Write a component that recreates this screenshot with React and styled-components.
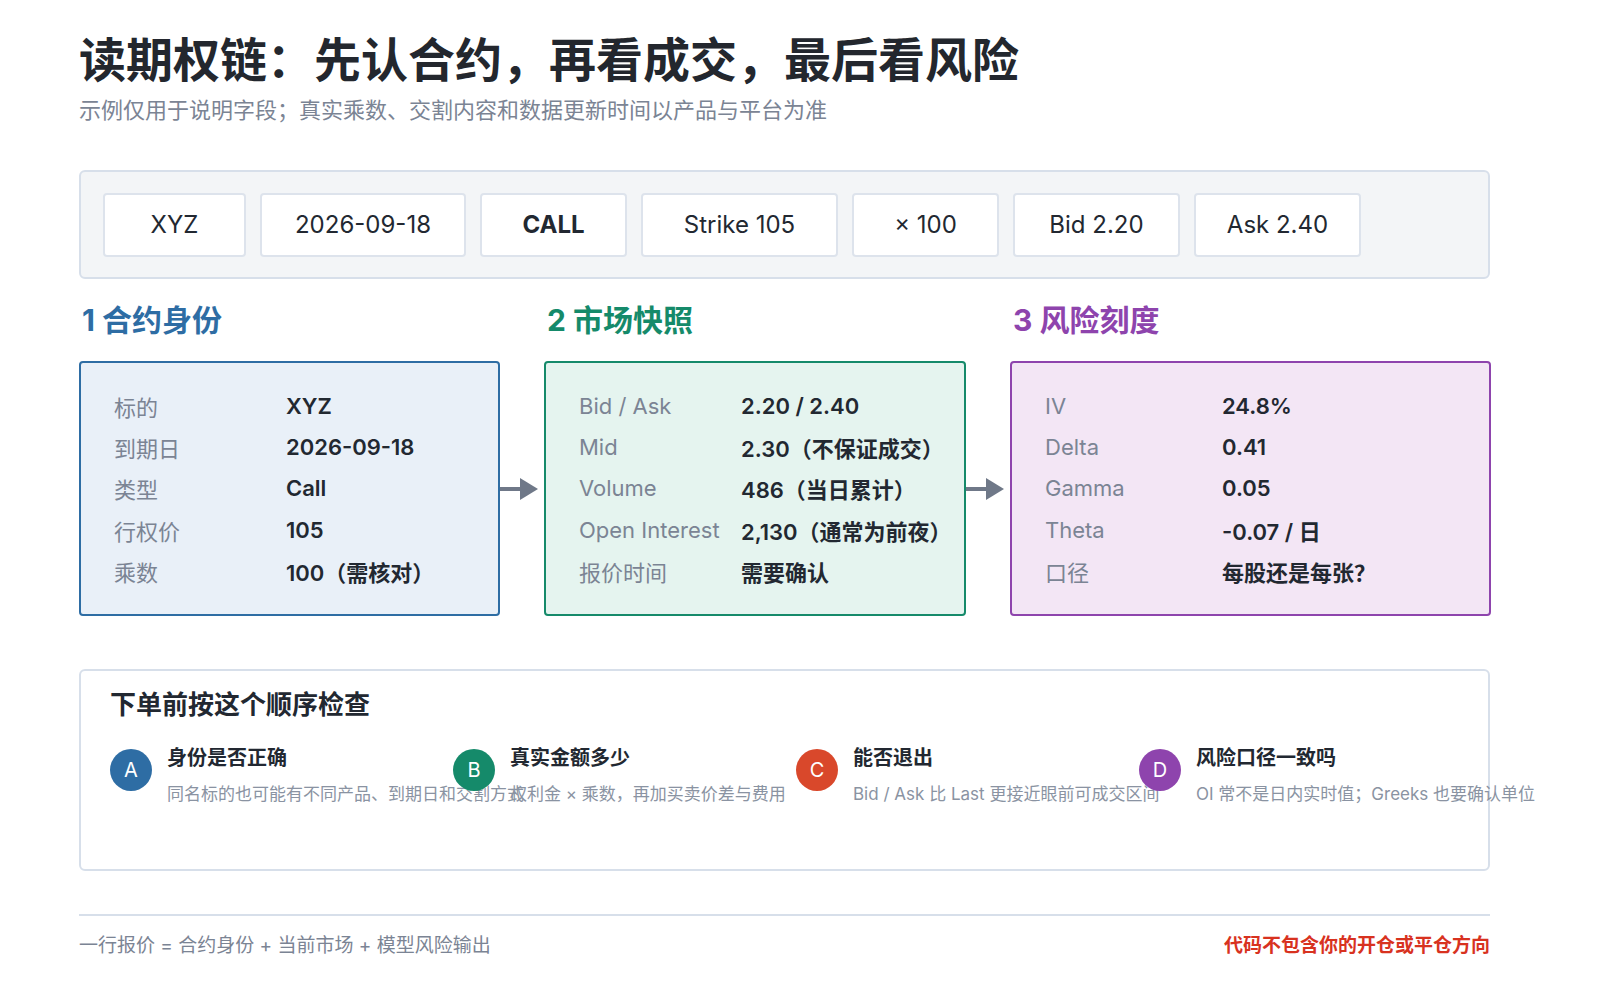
import React from 'react'
import styled, { createGlobalStyle } from 'styled-components'

const Global = createGlobalStyle`
  body {
    margin: 0;
    background: #fff;
    font-family: Inter, 'Noto Sans CJK SC', sans-serif;
    color: #222831;
  }
`

const Page = styled.div`
  width: 1411px;
  padding: 28px 0 0 79px;
`

const Title = styled.h1`
  margin: 0;
  font-size: 47px;
  font-weight: 700;
  line-height: 64px;
  color: #23272e;
`

const Sub = styled.p`
  margin: 3px 0 0;
  font-size: 22px;
  color: #7b8494;
  line-height: 30px;
`

const Toolbar = styled.div`
  margin-top: 45px;
  height: 109px;
  box-sizing: border-box;
  background: #f3f5f7;
  border: 2px solid #d7dfea;
  border-radius: 6px;
  display: flex;
  align-items: center;
  gap: 14px;
  padding: 0 22px;
`

const Chip = styled.div`
  width: ${(p) => p.w}px;
  height: 64px;
  box-sizing: border-box;
  background: #fff;
  border: 2px solid #dde3ec;
  border-radius: 4px;
  display: flex;
  align-items: center;
  justify-content: center;
  font-size: 24px;
  font-weight: ${(p) => (p.bold ? 700 : 400)};
  color: #222831;
`

const Flow = styled.div`
  margin-top: 20px;
  display: grid;
  grid-template-columns: 421px 44px 422px 44px 481px;
  grid-template-rows: auto 255px;
  row-gap: 20px;
`

const Head = styled.div`
  font-size: 30px;
  font-weight: 700;
  color: ${(p) => p.c};
  padding-left: 3px;
  line-height: 42px;
`

const Card = styled.div`
  box-sizing: border-box;
  border: 2px solid ${(p) => p.c};
  background: ${(p) => p.bg};
  border-radius: 4px;
  padding: 22px 0 0 33px;
  display: grid;
  grid-template-columns: ${(p) => p.lw}px 1fr;
  grid-auto-rows: 41.3px;
  align-items: center;
  font-size: 22px;
`

const Label = styled.div`
  color: #7b8494;
`

const Value = styled.div`
  font-weight: ${(p) => (p.cjk ? 700 : 600)};
  color: #222831;
  white-space: nowrap;
`

const ArrowCell = styled.div`
  display: flex;
  align-items: center;
  justify-content: center;
`

const Check = styled.div`
  margin-top: 53px;
  height: 202px;
  box-sizing: border-box;
  border: 2px solid #d7dfea;
  border-radius: 6px;
  padding: 16px 29px;
`

const CheckTitle = styled.div`
  font-size: 26px;
  font-weight: 700;
  line-height: 36px;
`

const Steps = styled.div`
  margin-top: 12px;
  display: grid;
  grid-template-columns: repeat(4, 343px);
`

const Step = styled.div`
  display: flex;
  gap: 15px;
`

const Dot = styled.div`
  flex: none;
  width: 42px;
  height: 42px;
  margin-top: 14px;
  border-radius: 50%;
  background: ${(p) => p.c};
  color: #fff;
  font-size: 20px;
  display: flex;
  align-items: center;
  justify-content: center;
`

const StepBody = styled.div`
  white-space: nowrap;
  padding-top: 8px;
`

const StepTitle = styled.div`
  font-size: 20px;
  font-weight: 700;
  line-height: 30px;
`

const StepDesc = styled.div`
  font-size: 17px;
  color: #8a93a2;
  line-height: 30px;
  margin-top: 6px;
`

const Footer = styled.div`
  margin-top: 43px;
  border-top: 2px solid #d7dfea;
  padding-top: 14px;
  display: flex;
  justify-content: space-between;
  font-size: 19px;
  color: #7b8494;
`

const Warn = styled.span`
  color: #d8321f;
  font-weight: 700;
`

const Arrow = () => (
  <svg width="44" height="26" viewBox="0 0 44 26">
    <rect x="0" y="11" width="22" height="4" fill="#6f7888" />
    <polygon points="20,2 38,13 20,24" fill="#6f7888" />
  </svg>
)

const chips = [
  ['XYZ', 143], ['2026-09-18', 206], ['CALL', 147, true], ['Strike 105', 197],
  ['× 100', 147], ['Bid 2.20', 167], ['Ask 2.40', 167],
]

const cards = [
  {
    h: '1 合约身份', c: '#2e6da4', bg: '#e9f0f8', lw: 172,
    rows: [['标的', 'XYZ'], ['到期日', '2026-09-18'], ['类型', 'Call'], ['行权价', '105'], ['乘数', '100（需核对）']],
  },
  {
    h: '2 市场快照', c: '#158a6a', bg: '#e5f4ef', lw: 162,
    rows: [['Bid / Ask', '2.20 / 2.40'], ['Mid', '2.30（不保证成交）'], ['Volume', '486（当日累计）'], ['Open Interest', '2,130（通常为前夜）'], ['报价时间', '需要确认', true]],
  },
  {
    h: '3 风险刻度', c: '#8e44ad', bg: '#f3e6f5', lw: 177,
    rows: [['IV', '24.8%'], ['Delta', '0.41'], ['Gamma', '0.05'], ['Theta', '-0.07 / 日'], ['口径', '每股还是每张？', true]],
  },
]

const steps = [
  ['A', '#2e6da4', '身份是否正确', '同名标的也可能有不同产品、到期日和交割方式'],
  ['B', '#158a6a', '真实金额多少', '权利金 × 乘数，再加买卖价差与费用'],
  ['C', '#d9482b', '能否退出', 'Bid / Ask 比 Last 更接近眼前可成交区间'],
  ['D', '#8e44ad', '风险口径一致吗', 'OI 常不是日内实时值；Greeks 也要确认单位'],
]

export default function App() {
  return (
    <>
      <Global />
      <Page>
        <Title>读期权链：先认合约，再看成交，最后看风险</Title>
        <Sub>示例仅用于说明字段；真实乘数、交割内容和数据更新时间以产品与平台为准</Sub>
        <Toolbar>
          {chips.map(([t, w, b]) => (
            <Chip key={t} w={w} bold={b}>{t}</Chip>
          ))}
        </Toolbar>
        <Flow>
          <Head c={cards[0].c}>{cards[0].h}</Head>
          <div />
          <Head c={cards[1].c}>{cards[1].h}</Head>
          <div />
          <Head c={cards[2].c}>{cards[2].h}</Head>
          {cards.map((cd, i) => (
            <React.Fragment key={cd.h}>
              <Card c={cd.c} bg={cd.bg} lw={cd.lw}>
                {cd.rows.map(([l, v, cjk]) => (
                  <React.Fragment key={l}>
                    <Label>{l}</Label>
                    <Value cjk={cjk}>{v}</Value>
                  </React.Fragment>
                ))}
              </Card>
              {i < 2 && <ArrowCell><Arrow /></ArrowCell>}
            </React.Fragment>
          ))}
        </Flow>
        <Check>
          <CheckTitle>下单前按这个顺序检查</CheckTitle>
          <Steps>
            {steps.map(([k, c, t, d]) => (
              <Step key={k}>
                <Dot c={c}>{k}</Dot>
                <StepBody>
                  <StepTitle>{t}</StepTitle>
                  <StepDesc>{d}</StepDesc>
                </StepBody>
              </Step>
            ))}
          </Steps>
        </Check>
        <Footer>
          <span>一行报价 = 合约身份 + 当前市场 + 模型风险输出</span>
          <Warn>代码不包含你的开仓或平仓方向</Warn>
        </Footer>
      </Page>
    </>
  )
}
